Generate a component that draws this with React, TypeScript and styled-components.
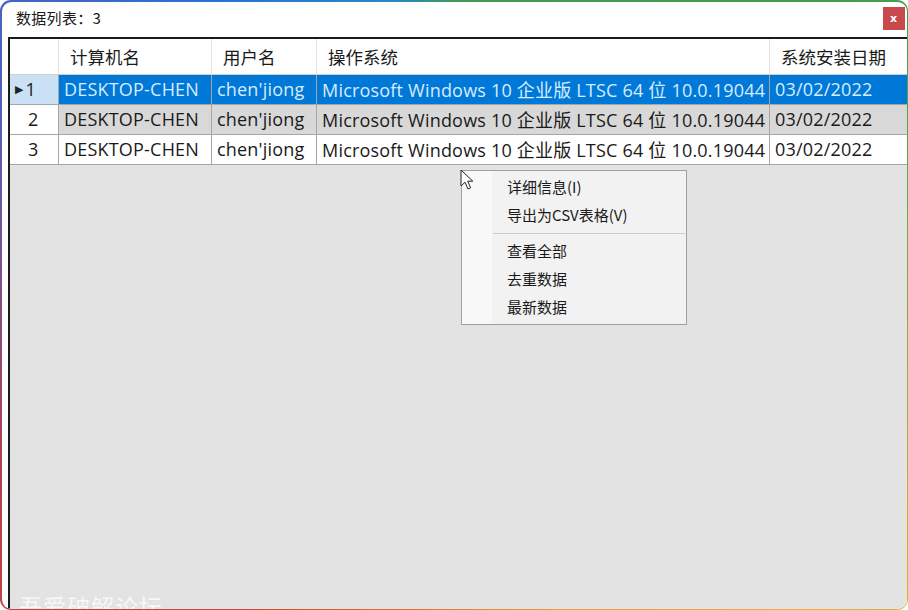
import React from "react";
import styled, { createGlobalStyle } from "styled-components";

const columns = [
  { key: "pc", title: "计算机名", width: 153 },
  { key: "user", title: "用户名", width: 105 },
  { key: "os", title: "操作系统", width: 453 },
  { key: "date", title: "系统安装日期", width: 140 },
];

const rows = [1, 2, 3].map((n) => ({
  id: n,
  pc: "DESKTOP-CHEN",
  user: "chen'jiong",
  os: "Microsoft Windows 10 企业版 LTSC 64 位 10.0.19044",
  date: "03/02/2022",
}));

const gridTemplate = `49px ${columns.map((c) => c.width + "px").join(" ")}`;

const menuItems = [
  ["详细信息(I)", "导出为CSV表格(V)"],
  ["查看全部", "去重数据", "最新数据"],
];

const App = () => {
  return (
    <>
      <GlobalStyle />
      <Frame>
        <Window>
          <TitleBar>
            <Title>数据列表：3</Title>
            <CloseButton>x</CloseButton>
          </TitleBar>
          <GridArea>
            <Table>
              <HeaderRow style={{ gridTemplateColumns: gridTemplate }}>
                <HeaderCell />
                {columns.map((c) => (
                  <HeaderCell key={c.key}>{c.title}</HeaderCell>
                ))}
              </HeaderRow>
              {rows.map((r, i) => (
                <DataRow key={r.id} style={{ gridTemplateColumns: gridTemplate }}>
                  <RowHeader $selected={i === 0}>
                    {i === 0 && <Caret>▶</Caret>}
                    {r.id}
                  </RowHeader>
                  {columns.map((c) => (
                    <Cell key={c.key} $selected={i === 0} $alt={i === 1}>
                      {r[c.key as keyof typeof r]}
                    </Cell>
                  ))}
                </DataRow>
              ))}
            </Table>
            <Menu>
              {menuItems.map((group, gi) => (
                <React.Fragment key={gi}>
                  {gi > 0 && <Separator />}
                  {group.map((label) => (
                    <MenuItem key={label}>{label}</MenuItem>
                  ))}
                </React.Fragment>
              ))}
            </Menu>
            <Cursor width="14" height="22" viewBox="0 0 14 22">
              <path
                d="M1 1 L1 17 L5 13.2 L8 20 L10.6 18.8 L7.7 12.2 L12.8 12.2 Z"
                fill="#fff"
                stroke="#222"
                strokeWidth="1"
                strokeLinejoin="round"
              />
            </Cursor>
            <Watermark>吾爱破解论坛</Watermark>
          </GridArea>
        </Window>
      </Frame>
    </>
  );
};

export default App;

const GlobalStyle = createGlobalStyle`
  html, body {
    margin: 0;
    padding: 0;
    background: #ffffff;
  }
  body {
    font-family: "Noto Sans CJK SC", "Noto Sans", sans-serif;
  }
`;

const Frame = styled.div`
  width: 908px;
  height: 610px;
  box-sizing: border-box;
  padding: 1.5px;
  border-radius: 11px;
  background: conic-gradient(
    from 0deg at 50% 50%,
    #3d9a55 0deg,
    #45a04a 60deg,
    #e6b62e 130deg,
    #e3a43a 160deg,
    #d7452c 215deg,
    #b24050 250deg,
    #5a5cb0 290deg,
    #2a70d8 320deg,
    #2f86c0 350deg,
    #3d9a55 360deg
  );
`;

const Window = styled.div`
  position: relative;
  display: flex;
  flex-direction: column;
  height: 100%;
  background: #ffffff;
  border-radius: 9.5px;
  overflow: hidden;
`;

const TitleBar = styled.div`
  display: flex;
  align-items: center;
  justify-content: space-between;
  height: 35px;
  padding: 0 2px 0 14.5px;
  flex-shrink: 0;
`;

const Title = styled.span`
  font-size: 15px;
  letter-spacing: 0.3px;
  color: #1a1a1a;
  margin-top: -3px;
`;

const CloseButton = styled.div`
  display: flex;
  align-items: center;
  justify-content: center;
  width: 22px;
  height: 23px;
  margin-top: -2px;
  background: #c9484b;
  color: #ffffff;
  font-family: "DejaVu Sans", sans-serif;
  font-size: 11px;
  font-weight: bold;
`;

const GridArea = styled.div`
  position: relative;
  flex: 1;
  margin-left: 6.5px;
  border-left: 2px solid #1a1a1a;
  border-top: 2px solid #1a1a1a;
  background: #e3e3e3;
  overflow: hidden;
`;

const Table = styled.div`
  display: flex;
  flex-direction: column;
  width: max-content;
`;

const HeaderRow = styled.div`
  display: grid;
  height: 35px;
  background: #ffffff;
  border-bottom: 1px solid #cfcfcf;
`;

const HeaderCell = styled.div`
  display: flex;
  align-items: center;
  padding-left: 11px;
  font-size: 17.5px;
  color: #1a1a1a;
  border-right: 1px solid #e2e2e2;
`;

const DataRow = styled.div`
  display: grid;
  height: 30px;
`;

const RowHeader = styled.div<{ $selected: boolean }>`
  display: flex;
  align-items: center;
  padding-left: ${(p) => (p.$selected ? "5px" : "18px")};
  font-family: "Open Sans", "Noto Sans CJK SC", sans-serif;
  font-size: 18px;
  color: #1a1a1a;
  background: ${(p) => (p.$selected ? "#c9e0f5" : "#ffffff")};
  border-right: 1px solid #a6a6a6;
  border-bottom: 1px solid #a6a6a6;
`;

const Caret = styled.span`
  font-family: "DejaVu Sans", sans-serif;
  font-size: 11px;
  margin-right: 2px;
  color: #222;
`;

const Cell = styled.div<{ $selected: boolean; $alt: boolean }>`
  display: flex;
  align-items: center;
  padding-left: 5px;
  white-space: nowrap;
  overflow: hidden;
  font-family: "Open Sans", "Noto Sans CJK SC", sans-serif;
  font-size: 18px;
  letter-spacing: 0.2px;
  color: ${(p) => (p.$selected ? "#d8ecff" : "#1a1a1a")};
  background: ${(p) => (p.$selected ? "#0078d7" : p.$alt ? "#d8d8d8" : "#ffffff")};
  border-right: 1px solid #a6a6a6;
  border-bottom: 1px solid #a6a6a6;
`;

const Menu = styled.div`
  position: absolute;
  left: 451px;
  top: 131px;
  width: 224px;
  padding: 2px 0 3px;
  border: 1px solid #a0a0a0;
  background: linear-gradient(to right, #f8f8f8 0, #f8f8f8 30px, #f2f2f2 30px);
`;

const MenuItem = styled.div`
  display: flex;
  align-items: center;
  height: 28px;
  padding-left: 45px;
  font-size: 15px;
  color: #1a1a1a;
`;

const Separator = styled.div`
  height: 1px;
  margin: 4px 1px 3px 31px;
  background: #c9c9c9;
`;

const Cursor = styled.svg`
  position: absolute;
  left: 450px;
  top: 130px;
`;

const Watermark = styled.div`
  position: absolute;
  left: 9px;
  bottom: -14px;
  font-size: 23px;
  letter-spacing: 1px;
  color: rgba(255, 255, 255, 0.75);
`;
